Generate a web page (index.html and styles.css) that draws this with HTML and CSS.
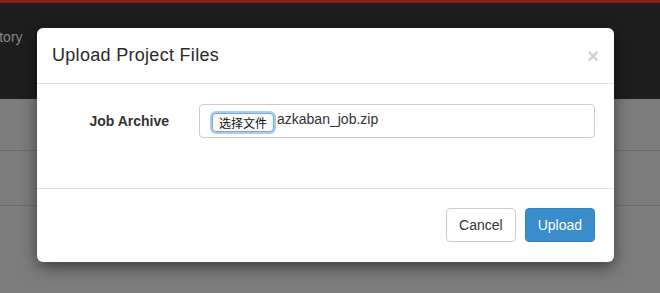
FILE: index.html
```html
<!DOCTYPE html>
<html lang="en">
<head>
  <meta charset="UTF-8" />
  <meta name="viewport" content="width=device-width, initial-scale=1.0" />
  <title>Upload Project Files</title>
  <link rel="stylesheet" href="styles.css">
</head>
<body>
  <div class="navbar">
    <span class="nav-link">History</span>
  </div>
  <div class="page">
    <div class="row row-head"></div>
    <div class="row"></div>
  </div>

  <div class="modal">
    <div class="modal-header">
      <span class="close">&times;</span>
      <h4 class="modal-title">Upload Project Files</h4>
    </div>
    <div class="modal-body">
      <div class="form-group">
        <label class="control-label">Job Archive</label>
        <div class="field">
          <div class="form-control">
            <span class="file-btn">选择文件</span>
            <span class="file-name">azkaban_job.zip</span>
          </div>
        </div>
      </div>
    </div>
    <div class="modal-footer">
      <button class="btn btn-default">Cancel</button>
      <button class="btn btn-primary">Upload</button>
    </div>
  </div>
</body>
</html>
```

FILE: styles.css
```css
body {
  margin: 0;
  font-family: 'Liberation Sans', Arial, sans-serif;
  font-size: 14px;
  color: #333;
  background-color: #7c7c7c;
  height: 293px;
  overflow: hidden;
}
.navbar {
  height: 96px;
  border-top: 3px solid #8e1f17;
  background-color: #1d1d1d;
  display: flex;
  align-items: flex-start;
}
.nav-link {
  margin-left: -21px;
  margin-top: 26px;
  color: #858585;
  font-size: 14px;
}
.page {
  display: flex;
  flex-direction: column;
}
.row {
  height: 54px;
  border-bottom: 1px solid #6c6c6c;
}
.row-head {
  height: 51px;
}
.modal {
  position: absolute;
  left: 37px;
  top: 28px;
  width: 577px;
  background-color: #fff;
  border-radius: 6px;
  box-shadow: 0 5px 15px rgba(0, 0, 0, 0.5);
}
.modal-header {
  padding: 15px;
  border-bottom: 1px solid #e5e5e5;
}
.modal-title {
  margin: 0;
  font-size: 18px;
  font-weight: normal;
  line-height: 25px;
  letter-spacing: 0.3px;
  color: #2a2a2a;
}
.close {
  float: right;
  font-size: 20px;
  font-weight: bold;
  line-height: 1;
  color: #000;
  opacity: 0.18;
  margin-top: 3px;
}
.modal-body {
  padding: 20px 4px 50px 5px;
}
.form-group {
  display: flex;
}
.control-label {
  width: 112px;
  padding: 7px 15px 0;
  text-align: right;
  font-weight: bold;
  line-height: 20px;
}
.field {
  flex: 1;
  padding: 0 15px;
}
.form-control {
  height: 34px;
  box-sizing: border-box;
  padding: 0 12px;
  border: 1px solid #ccc;
  border-radius: 4px;
  display: flex;
  align-items: center;
}
.file-btn {
  font-family: 'Noto Sans CJK SC', sans-serif;
  font-size: 12px;
  line-height: 15px;
  padding: 1px 6px;
  margin-top: 2px;
  border: 1px solid #7aa7d6;
  border-radius: 4px;
  box-shadow: 0 0 0 2px #a8cdf0;
  color: #111;
  background-color: #fafafa;
}
.file-name {
  margin-left: 3px;
  margin-top: -4px;
  font-size: 14px;
  color: #333;
}
.modal-footer {
  padding: 19px 19px 20px;
  border-top: 1px solid #e5e5e5;
  display: flex;
  justify-content: flex-end;
  gap: 9px;
}
.btn {
  font-family: 'Liberation Sans', Arial, sans-serif;
  font-size: 14px;
  line-height: 20px;
  padding: 6px 12px;
  border: 1px solid #ccc;
  border-radius: 4px;
  background-color: #fff;
  color: #333;
}
.btn-primary {
  background-color: #3a8dcb;
  border-color: #3583bf;
  color: #fff;
}
```
